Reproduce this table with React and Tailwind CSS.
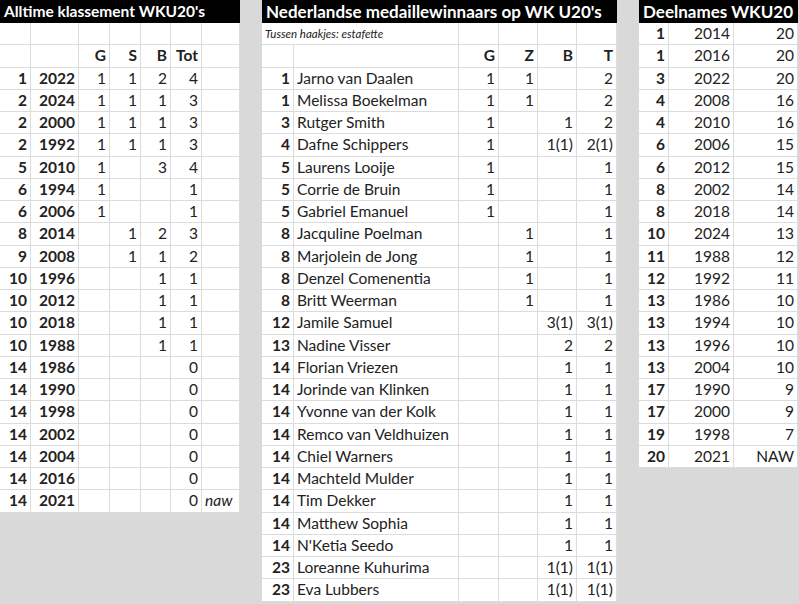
import React from 'react';

// Spreadsheet-style overview of Dutch results at the World U20 championships

const alltime = [
  ['1', '2022', '1', '1', '2', '4', ''],
  ['2', '2024', '1', '1', '1', '3', ''],
  ['2', '2000', '1', '1', '1', '3', ''],
  ['2', '1992', '1', '1', '1', '3', ''],
  ['5', '2010', '1', '', '3', '4', ''],
  ['6', '1994', '1', '', '', '1', ''],
  ['6', '2006', '1', '', '', '1', ''],
  ['8', '2014', '', '1', '2', '3', ''],
  ['9', '2008', '', '1', '1', '2', ''],
  ['10', '1996', '', '', '1', '1', ''],
  ['10', '2012', '', '', '1', '1', ''],
  ['10', '2018', '', '', '1', '1', ''],
  ['10', '1988', '', '', '1', '1', ''],
  ['14', '1986', '', '', '', '0', ''],
  ['14', '1990', '', '', '', '0', ''],
  ['14', '1998', '', '', '', '0', ''],
  ['14', '2002', '', '', '', '0', ''],
  ['14', '2004', '', '', '', '0', ''],
  ['14', '2016', '', '', '', '0', ''],
  ['14', '2021', '', '', '', '0', 'naw'],
];

const medalists = [
  ['1', 'Jarno van Daalen', '1', '1', '', '2'],
  ['1', 'Melissa Boekelman', '1', '1', '', '2'],
  ['3', 'Rutger Smith', '1', '', '1', '2'],
  ['4', 'Dafne Schippers', '1', '', '1(1)', '2(1)'],
  ['5', 'Laurens Looije', '1', '', '', '1'],
  ['5', 'Corrie de Bruin', '1', '', '', '1'],
  ['5', 'Gabriel Emanuel', '1', '', '', '1'],
  ['8', 'Jacquline Poelman', '', '1', '', '1'],
  ['8', 'Marjolein de Jong', '', '1', '', '1'],
  ['8', 'Denzel Comenentia', '', '1', '', '1'],
  ['8', 'Britt Weerman', '', '1', '', '1'],
  ['12', 'Jamile Samuel', '', '', '3(1)', '3(1)'],
  ['13', 'Nadine Visser', '', '', '2', '2'],
  ['14', 'Florian Vriezen', '', '', '1', '1'],
  ['14', 'Jorinde van Klinken', '', '', '1', '1'],
  ['14', 'Yvonne van der Kolk', '', '', '1', '1'],
  ['14', 'Remco van Veldhuizen', '', '', '1', '1'],
  ['14', 'Chiel Warners', '', '', '1', '1'],
  ['14', 'Machteld Mulder', '', '', '1', '1'],
  ['14', 'Tim Dekker', '', '', '1', '1'],
  ['14', 'Matthew Sophia', '', '', '1', '1'],
  ['14', "N'Ketia Seedo", '', '', '1', '1'],
  ['23', 'Loreanne Kuhurima', '', '', '1(1)', '1(1)'],
  ['23', 'Eva Lubbers', '', '', '1(1)', '1(1)'],
];

const deelnames = [
  ['1', '2014', '20'],
  ['1', '2016', '20'],
  ['3', '2022', '20'],
  ['4', '2008', '16'],
  ['4', '2010', '16'],
  ['6', '2006', '15'],
  ['6', '2012', '15'],
  ['8', '2002', '14'],
  ['8', '2018', '14'],
  ['10', '2024', '13'],
  ['11', '1988', '12'],
  ['12', '1992', '11'],
  ['13', '1986', '10'],
  ['13', '1994', '10'],
  ['13', '1996', '10'],
  ['13', '2004', '10'],
  ['17', '1990', '9'],
  ['17', '2000', '9'],
  ['19', '1998', '7'],
  ['20', '2021', 'NAW'],
];

const Title = ({ children, size = 'text-[17px]' }) => (
  <div className={`h-[23px] bg-black text-white font-bold ${size} leading-[23px] pl-[4px] whitespace-nowrap overflow-hidden`}>
    {children}
  </div>
);

// one spreadsheet row; cols = [{ w, cls }]
const Row = ({ cols, cells }) => (
  <div className='flex h-[22.25px]'>
    {cells.map((c, i) => (
      <div
        key={i}
        className={`${cols[i].w} ${cols[i].cls} shrink-0 h-full flex items-center border-r border-b border-[#dcdcdc] px-[3px] whitespace-nowrap`}
      >
        {c}
      </div>
    ))}
  </div>
);

const leftCols = [
  { w: 'w-[31px]', cls: 'justify-end font-bold' },
  { w: 'w-[48px]', cls: 'justify-end font-bold' },
  { w: 'w-[31px]', cls: 'justify-end' },
  { w: 'w-[31px]', cls: 'justify-end' },
  { w: 'w-[30px]', cls: 'justify-end' },
  { w: 'w-[31px]', cls: 'justify-end' },
  { w: 'w-[38px]', cls: 'justify-start italic' },
];

const leftHead = leftCols.map((c) => ({ ...c, cls: c.cls + ' font-bold' }));

const midCols = [
  { w: 'w-[32px]', cls: 'justify-end font-bold' },
  { w: 'w-[165px]', cls: 'justify-start' },
  { w: 'w-[40px]', cls: 'justify-end' },
  { w: 'w-[39px]', cls: 'justify-end' },
  { w: 'w-[39px]', cls: 'justify-end' },
  { w: 'w-[40px]', cls: 'justify-end' },
];

const midHead = midCols.map((c) => ({ ...c, cls: c.cls + ' font-bold' }));

const rightCols = [
  { w: 'w-[30px]', cls: 'justify-end font-bold' },
  { w: 'w-[65px]', cls: 'justify-end' },
  { w: 'w-[64px]', cls: 'justify-end' },
];

export default function App() {
  return (
    <div
      className='w-[799px] h-[604px] bg-[#d9d9d9] flex items-start overflow-hidden text-[15.5px] text-[#222]'
      style={{ fontFamily: 'Lato, "Open Sans", sans-serif' }}
    >
      {/* Alltime klassement */}
      <div className='w-[240px] bg-white'>
        <Title size='text-[15.5px]'>Alltime klassement WKU20's</Title>
        <Row cols={leftCols} cells={['', '', '', '', '', '', '']} />
        <Row cols={leftHead} cells={['', '', 'G', 'S', 'B', 'Tot', '']} />
        {alltime.map((r, i) => (
          <Row key={i} cols={leftCols} cells={r} />
        ))}
      </div>

      {/* Medaillewinnaars */}
      <div className='w-[355px] ml-[22px] bg-white'>
        <Title>Nederlandse medaillewinnaars op WK U20's</Title>
        <div className='flex h-[22.25px]'>
          <div className='w-[197px] h-full flex items-center border-r border-b border-[#dcdcdc] px-[3px] text-[11.5px] italic whitespace-nowrap'>
            Tussen haakjes: estafette
          </div>
          <div className='w-[40px] h-full border-r border-b border-[#dcdcdc]' />
          <div className='w-[39px] h-full border-r border-b border-[#dcdcdc]' />
          <div className='w-[39px] h-full border-r border-b border-[#dcdcdc]' />
          <div className='w-[40px] h-full border-r border-b border-[#dcdcdc]' />
        </div>
        <Row cols={midHead} cells={['', '', 'G', 'Z', 'B', 'T']} />
        {medalists.map((r, i) => (
          <Row key={i} cols={midCols} cells={r} />
        ))}
      </div>

      {/* Deelnames */}
      <div className='w-[159px] ml-[22px] bg-white'>
        <Title>Deelnames WKU20</Title>
        {deelnames.map((r, i) => (
          <Row key={i} cols={rightCols} cells={r} />
        ))}
      </div>
    </div>
  );
}
